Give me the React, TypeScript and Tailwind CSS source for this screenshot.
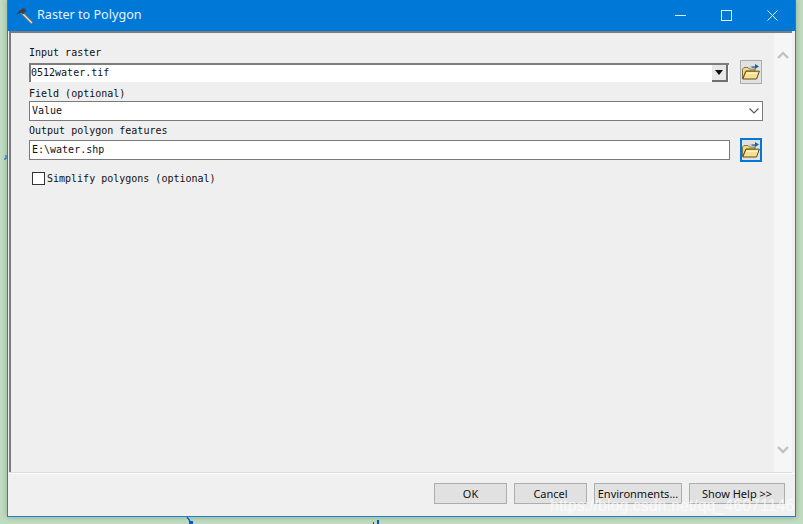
import React from "react";

const mono = "font-['DejaVu_Sans_Mono','Liberation_Mono',monospace] text-[10px] leading-[12px] text-[#111]";

const FolderIcon: React.FC = () => (
  <svg width="18" height="18" viewBox="0 0 18 18">
    <path d="M8 3.5 L13 3.5 L13 8 L8 8 Z" fill="#f4f4f4" stroke="#b5b5b5" strokeWidth="0.6" />
    <path d="M9.5 3.5 H13 V1 L17 3.5 L13 6 V4.8 H9.5 Z" fill="#1e5f9e" />
    <path d="M0.5 15.5 V6 L2 4.5 H6 L7.5 6 H13 V8 H4 L0.5 15.5 Z" fill="#f2d884" stroke="#6b5a25" strokeWidth="0.8" />
    <path d="M0.8 16 L4 8.2 H17.4 L14.5 16 Z" fill="#f8e08e" stroke="#5e4c1c" strokeWidth="1" />
    <path d="M4.6 9.6 H15.4 L14.8 11 H4 Z" fill="#fdf2c0" />
  </svg>
);

const HammerIcon: React.FC = () => (
  <svg width="17" height="17" viewBox="0 0 17 17">
    <path d="M6 6 L15.5 15.5" stroke="#8a7a60" strokeWidth="2.6" strokeLinecap="round" />
    <path d="M6 6 L15.5 15.5" stroke="#efe2cb" strokeWidth="1.2" strokeLinecap="round" />
    <path d="M0.5 8 C1.5 4.5 4 2.5 8 1 L10.5 3.5 L7 7.5 L5 5.8 C3.5 6 2 6.8 0.5 8 Z" fill="#3a4148" />
  </svg>
);

const WindowButtons: React.FC = () => (
  <div className="flex items-center">
    <div className="w-[46px] flex justify-center">
      <svg width="11" height="11" viewBox="0 0 11 11"><path d="M0 5.5 H11" stroke="#dcecfa" strokeWidth="1" /></svg>
    </div>
    <div className="w-[46px] flex justify-center">
      <svg width="11" height="11" viewBox="0 0 11 11"><rect x="0.5" y="0.5" width="10" height="10" fill="none" stroke="#f0f7fd" strokeWidth="1" /></svg>
    </div>
    <div className="w-[46px] flex justify-center">
      <svg width="11" height="11" viewBox="0 0 11 11"><path d="M0.5 0.5 L10.5 10.5 M10.5 0.5 L0.5 10.5" stroke="#f0f7fd" strokeWidth="1" /></svg>
    </div>
  </div>
);

const BrowseButton: React.FC<{ focused?: boolean }> = ({ focused }) => (
  <div
    className={
      focused
        ? "w-[22px] h-[24px] flex items-center justify-center bg-[#e1e1e1] border-[2px] border-[#0078d7]"
        : "w-[22px] h-[24px] flex items-center justify-center bg-[#e1e1e1] border border-[#adadad]"
    }
  >
    <FolderIcon />
  </div>
);

const FooterButton: React.FC<{ label: string; width: string }> = ({ label, width }) => (
  <div className={`${width} h-[21px] flex items-center justify-center pt-px bg-[#e1e1e1] border border-[#adadad] text-[11px] text-[#111] font-['Noto_Sans',sans-serif]`}>
    {label}
  </div>
);

const App: React.FC = () => {
  return (
    <div className="relative w-[803px] h-[524px] overflow-hidden bg-[#c2dcc2]">
      <div className="ml-[7px] w-[789px] h-[517px] flex flex-col bg-[#f0f0f0] border-x border-b border-[#1a82d6] shadow-[0_0_6px_rgba(90,130,90,0.55)]">
        <div className="h-[31px] shrink-0 flex items-center justify-between bg-[#0078d7]">
          <div className="flex items-center gap-[4px] pl-[8px]">
            <HammerIcon />
            <span className="text-[12.6px] text-[#e8f3fc] font-['Noto_Sans',sans-serif]">Raster to Polygon</span>
          </div>
          <WindowButtons />
        </div>

        <div className="flex-1 flex min-h-0 ml-px mr-[3px] border-t-[2px] border-b border-t-[#7d7d7d] border-b-[#dcdcdc]">
          <div className="flex-1 flex flex-col min-w-0 bg-[#efefef] border-l-[2px] border-[#7d7d7d] pl-[18px] pt-[14px]">
            <div className={`${mono} h-[12px]`}>Input raster</div>
            <div className="mt-px h-[24px] flex items-center">
              <div className="w-[700px] h-[19px] flex items-center justify-between bg-white border-l-[2px] border-t-[2px] border-[#7c7c7c]">
                <span className={mono}>0512water.tif</span>
                <div className="w-[16px] h-[17px] mr-[1px] flex items-center justify-center bg-[#e8e8e8] border-r-[2px] border-b-[2px] border-[#6f6f6f]">
                  <svg width="8" height="5" viewBox="0 0 8 5"><path d="M0 0 H8 L4 5 Z" fill="#111" /></svg>
                </div>
              </div>
              <div className="ml-[11px]"><BrowseButton /></div>
            </div>
            <div className={`${mono} h-[12px] mt-[4px]`}>Field (optional)</div>
            <div className="mt-px w-[734px] h-[20px] flex items-center justify-between bg-white border border-[#7a7a7a] pl-[2px] pr-[3px]">
              <span className={mono}>Value</span>
              <svg width="10" height="6" viewBox="0 0 10 6"><path d="M0.5 0.5 L5 5 L9.5 0.5" fill="none" stroke="#555" strokeWidth="1.1" /></svg>
            </div>
            <div className={`${mono} h-[12px] mt-[4px]`}>Output polygon features</div>
            <div className="mt-px h-[24px] flex items-center">
              <div className="w-[701px] h-[20px] flex items-center bg-white border border-[#7a7a7a] pl-[2px]">
                <span className={mono}>E:\water.shp</span>
              </div>
              <div className="ml-[10px]"><BrowseButton focused /></div>
            </div>
            <div className="mt-[10px] ml-[3px] flex items-center gap-[2px]">
              <div className="w-[13px] h-[13px] bg-white border border-[#333]" />
              <span className={`${mono} pt-px`}>Simplify polygons (optional)</span>
            </div>
          </div>

          <div className="w-[18px] shrink-0 flex flex-col items-center justify-between bg-[#f6f6f6] pt-[18px] pb-[18px]">
            <svg width="12" height="8" viewBox="0 0 12 8"><path d="M1 7 L6 2 L11 7" fill="none" stroke="#c2c2c2" strokeWidth="2.4" /></svg>
            <svg width="12" height="8" viewBox="0 0 12 8"><path d="M1 1 L6 6 L11 1" fill="none" stroke="#c2c2c2" strokeWidth="2.4" /></svg>
          </div>
        </div>

        <div className="h-[43px] shrink-0 flex justify-end items-start gap-[7px] pt-[9px] pr-[10px] border-t border-white">
          <FooterButton label="OK" width="w-[73px]" />
          <FooterButton label="Cancel" width="w-[73px]" />
          <FooterButton label="Environments..." width="w-[88px]" />
          <FooterButton label="Show Help >>" width="w-[96px]" />
        </div>
      </div>

      {/* watermark over the dialog */}
      <span className="absolute left-[550px] top-[496px] text-[16px] leading-[20px] text-white/70 font-['Liberation_Sans',sans-serif] whitespace-nowrap">
        https://blog.csdn.net/qq_46071146
      </span>

      {/* bits of the map peeking out behind the dialog */}
      <svg className="absolute left-[186px] top-[517px]" width="8" height="7" viewBox="0 0 8 7">
        <path d="M1 0 L4 4" stroke="#0a55d0" strokeWidth="1.3" fill="none" />
        <rect x="3" y="4" width="4" height="3" fill="#0a55d0" />
      </svg>
      <svg className="absolute left-[373px] top-[520px]" width="8" height="4" viewBox="0 0 8 4">
        <rect x="0" y="2" width="1" height="2" fill="#0a55d0" />
        <rect x="4" y="0" width="2" height="4" fill="#0a55d0" />
      </svg>
      <svg className="absolute left-[4px] top-[155px]" width="3" height="5" viewBox="0 0 3 5">
        <path d="M2 0 V4 H0" stroke="#0a55d0" strokeWidth="1" fill="none" />
      </svg>
    </div>
  );
};

export default App;
